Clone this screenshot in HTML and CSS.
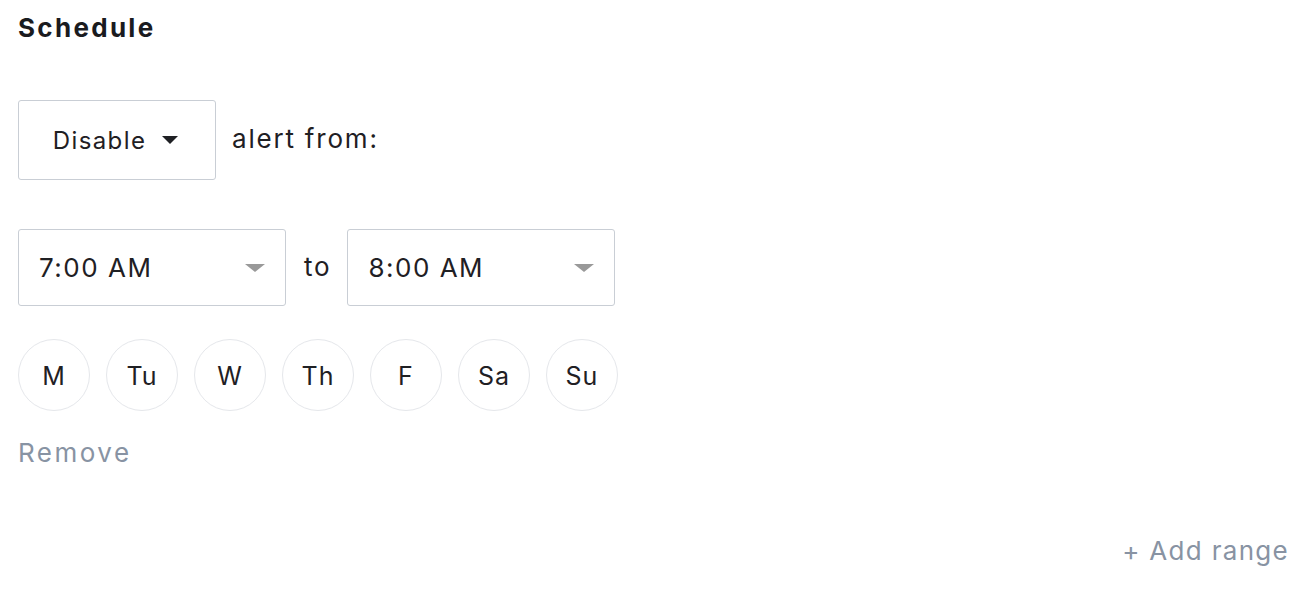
FILE: index.html
```html
<!DOCTYPE html>
<html>
<head>
<meta charset="utf-8">
<link rel="stylesheet" href="styles.css">
</head>
<body>
<div class="page">
  <h2 class="title">Schedule</h2>
  <div class="row action-row">
    <button class="action-btn">Disable <span class="caret"></span></button>
    <span class="label">alert from:</span>
  </div>
  <div class="row time-row">
    <div class="select"><span>7:00 AM</span><span class="arrow"></span></div>
    <span class="label to">to</span>
    <div class="select"><span>8:00 AM</span><span class="arrow"></span></div>
  </div>
  <div class="row days">
    <span class="day">M</span>
    <span class="day">Tu</span>
    <span class="day">W</span>
    <span class="day">Th</span>
    <span class="day">F</span>
    <span class="day">Sa</span>
    <span class="day">Su</span>
  </div>
  <div class="remove">Remove</div>
  <div class="add-wrap"><span class="add">+ Add range</span></div>
</div>
</body>
</html>
```
FILE: styles.css
```css
html, body {
  margin: 0;
  padding: 0;
  background: #fff;
}
body {
  font-family: Inter, "Noto Sans", sans-serif;
  color: #1f2024;
}
.page {
  display: flex;
  flex-direction: column;
  padding: 0 25px 0 18px;
}
.title {
  margin: 13px 0 0;
  font-size: 26px;
  font-weight: 700;
  line-height: 30px;
  letter-spacing: 2.3px;
  color: #1a1b1f;
}
.row {
  display: flex;
  align-items: center;
}
.action-row {
  margin-top: 57px;
}
.action-btn {
  width: 198px;
  height: 80px;
  border: 1px solid #c9ced5;
  border-radius: 3px;
  background: #fff;
  font-family: inherit;
  font-size: 24px;
  letter-spacing: 1.4px;
  color: #1f2024;
  display: flex;
  align-items: center;
  justify-content: center;
  gap: 16px;
  padding: 0 3px 0 0;
}
.caret {
  width: 0;
  height: 0;
  border-left: 8.5px solid transparent;
  border-right: 8.5px solid transparent;
  border-top: 8px solid #1f2024;
}
.label {
  font-size: 26px;
  letter-spacing: 1.8px;
  margin-left: 16px;
  margin-top: -4px;
}
.time-row {
  margin-top: 49px;
}
.select {
  width: 268px;
  height: 77px;
  box-sizing: border-box;
  border: 1px solid #c9ced5;
  border-radius: 3px;
  display: flex;
  align-items: center;
  justify-content: space-between;
  padding: 0 20px 0 20px;
  font-size: 26px;
  letter-spacing: 1.5px;
}
.arrow {
  width: 0;
  height: 0;
  border-left: 10px solid transparent;
  border-right: 10px solid transparent;
  border-top: 8px solid #999;
}
.to {
  margin: -2px 16px 0 18px;
}
.days {
  margin-top: 33px;
  gap: 16px;
}
.day {
  width: 72px;
  height: 72px;
  box-sizing: border-box;
  border: 1px solid #e5e7eb;
  border-radius: 50%;
  display: flex;
  align-items: center;
  justify-content: center;
  font-size: 25px;
  letter-spacing: 1px;
  padding-top: 2px;
}
.remove {
  margin-top: 26px;
  font-size: 26px;
  letter-spacing: 2.5px;
  color: #8893a3;
  line-height: 32px;
}
.add-wrap {
  display: flex;
  justify-content: flex-end;
  margin-top: 66px;
}
.add {
  font-size: 26px;
  letter-spacing: 1.3px;
  color: #8893a3;
  line-height: 32px;
}
```
